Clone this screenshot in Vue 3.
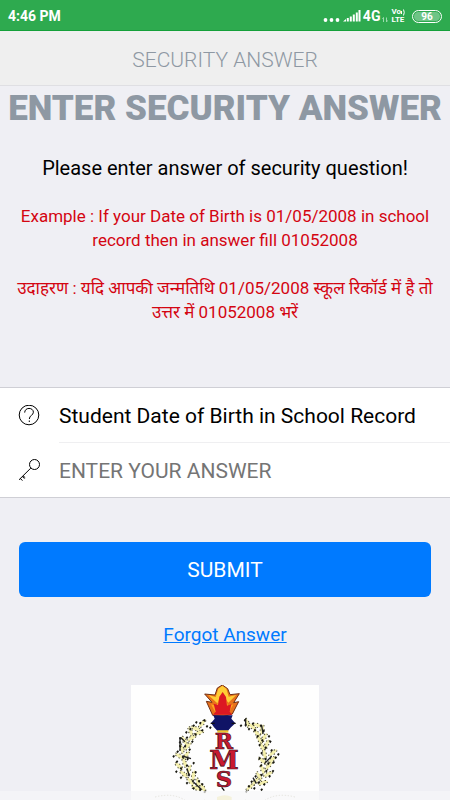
<script setup>
import { ref } from 'vue'

const answer = ref('')

const leaves = [
  [232, 128, -50], [212, 142, 200], [222, 156, -20], [196, 152, 70], [200, 172, -30],
  [178, 180, 60], [188, 196, -50], [170, 204, 75], [164, 226, 30], [184, 224, -60],
  [178, 246, 70], [162, 256, 40], [192, 266, -70], [176, 280, 40], [206, 284, -80],
  [196, 302, 50], [218, 306, 80], [214, 322, 20], [234, 322, 60],
  [366, 126, 70], [382, 138, 40], [398, 134, 20], [412, 146, -80], [396, 158, 50],
  [418, 170, -60], [404, 178, 60], [426, 190, -70], [412, 200, 60], [444, 216, -40],
  [418, 220, 80], [442, 236, -40], [412, 240, 40], [432, 254, -50], [412, 266, 70],
  [430, 280, -30], [402, 286, 60], [392, 302, -50], [414, 306, -20], [376, 318, -40]
]

const specks = [
  [238, 118], [226, 126], [214, 124], [206, 134], [246, 136], [256, 140], [196, 144],
  [232, 148], [184, 154], [212, 160], [166, 172], [165, 184], [166, 196], [186, 170],
  [202, 182], [180, 196], [194, 206], [158, 212], [146, 226], [174, 228], [188, 234],
  [156, 242], [206, 246], [186, 254], [168, 262], [154, 272], [212, 274], [192, 282],
  [168, 290], [204, 300], [186, 306], [222, 300], [232, 310], [206, 322], [226, 326], [240, 332],
  [348, 134], [360, 118], [362, 132], [372, 144], [384, 128], [390, 148], [408, 134],
  [416, 150], [398, 166], [412, 178], [432, 166], [436, 182], [404, 192], [422, 200],
  [440, 208], [460, 220], [410, 216], [452, 230], [446, 244], [422, 234], [404, 232],
  [430, 248], [408, 254], [444, 270], [424, 270], [410, 282], [434, 286], [392, 286],
  [380, 302], [402, 304], [418, 310], [372, 316], [388, 322], [410, 326], [364, 332]
]
</script>

<template>
  <div class="app">
    <header class="status">
      <span class="time">4:46 PM</span>
      <div class="indicators">
        <svg width="40" height="16" viewBox="0 0 40 16" fill="#fff" aria-hidden="true">
          <circle cx="2.500" cy="12" r="1.900" /><circle cx="8.500" cy="12" r="1.900" /><circle cx="14.500" cy="12" r="1.900" />
          <path d="M20 13.500l3-2.500v2.500zM23.800 10h2v3.500h-2zM26.800 8.500h2v5h-2zM29.800 6.500h2v7h-2zM32.800 4.500h2v9h-2zM35.500 2h2v11.500h-2z" />
        </svg>
        <span class="network">4G</span>
        <svg class="data" width="6" height="16" viewBox="0 0 6 16" fill="none" stroke="#9bdcae" stroke-width="1" aria-hidden="true">
          <path d="M1.500 12V7.500L.5 9M4.500 7.500V12l1-1.500" />
        </svg>
        <span class="volte">
          <span class="vo">Vo<svg width="4" height="7" viewBox="0 0 4 7" fill="none" stroke="#fff" aria-hidden="true"><path d="M.5 2v3M2.500.500q1.500 3 0 6" /></svg></span>
          <span>LTE</span>
        </span>
        <span class="battery"><span>96</span></span>
      </div>
    </header>

    <nav class="navbar">SECURITY ANSWER</nav>

    <main class="content">
      <h1>ENTER SECURITY ANSWER</h1>
      <p class="lead">Please enter answer of security question!</p>
      <p class="hint">Example : If your Date of Birth is 01/05/2008 in school record then in answer fill 01052008</p>
      <p class="hint">उदाहरण : यदि आपकी जन्मतिथि 01/05/2008 स्कूल रिकॉर्ड में है तो उत्तर में 01052008 भरें</p>

      <form @submit.prevent>
        <div class="fields">
          <div class="row">
            <svg width="22" height="22" viewBox="0 0 22 22" fill="none" stroke="#000" stroke-width="1" aria-hidden="true">
              <circle cx="11" cy="10" r="9.800" />
              <path d="M6.700 7.600c0-2.500 1.800-4.200 4.300-4.200s4.400 1.600 4.400 3.800c0 2.900-4.100 3.400-4.100 6.800" />
              <path d="M11.300 15.500v1.500" />
            </svg>
            <label for="answer">Student Date of Birth in School Record</label>
          </div>
          <div class="row">
            <svg width="22" height="22" viewBox="0 0 22 22" fill="none" stroke="#000" stroke-width="1" aria-hidden="true">
              <circle cx="16.500" cy="5.500" r="5" />
              <path d="M12.900 9L1 20.800M2.200 19.500l2.300 2M4.200 17.500l2.300 2M5 16.800l2.200 1.800" />
            </svg>
            <input id="answer" v-model="answer" type="text" placeholder="ENTER YOUR ANSWER">
          </div>
        </div>
        <button class="submit" type="submit">SUBMIT</button>
      </form>

      <a class="forgot" href="#forgot">Forgot Answer</a>

      <svg class="crest" viewBox="18 12 564 564" role="img" aria-label="RMS">
        <path fill="#fefefe" d="M18 12h564v564H18z" />
        <g v-for="(leaf, i) in leaves" :key="'l' + i" :transform="`translate(${leaf[0]} ${leaf[1]}) rotate(${leaf[2]})`">
          <path d="M-17 0Q0-13 17 0Q0 9-17 0" fill="#f5f0ad" />
          <path d="M-16-2Q0-11 16-1M-13 3Q2 8 17 1" fill="none" stroke="#4b4934" stroke-width="3" stroke-dasharray="4 8" />
        </g>
        <path v-for="(s, i) in specks" :key="'s' + i" :d="`M${s[0] - 4} ${s[1]}l4-4 4 3-4 6z`" fill="#17170f" />
        <path d="M165 168v42M168 170l12 12M362 112v24M410 134l4 24M172 225l26 8M206 304l22 20M186 262l6 20M440 226l-22 22M384 290l10 18" fill="none" stroke="#222" stroke-width="4" />
        <path d="M90 348q55-14 90 10t60-4M510 348q-55-14-90 10t-60-4" fill="none" stroke="#b8b59d" stroke-width="3" stroke-dasharray="4 5" />
        <path d="M276 348q24-10 44 0v14h-44z" fill="#f1e69a" />
        <path d="M239 39l31 3 7-21 15-9 16 11 7 18 28-3-17 27 15-3-19 37-28 8-31-4-19-42 17 3z" fill="#e9711a" stroke="#713014" stroke-width="3" />
        <path d="M250 42l22 6 8-25 12-9 12 9 7 24 23-5-24 23-17-22-16 24z" fill="#ffcd35" />
        <path d="M258 70l17 5 8-24 10-14 10 16 6 23 16-6-14 26H272z" fill="#ffa51e" />
        <path d="M264 101l8-9-6-24 13 4 4-25 10-14 10 15 3 26 13-4-5 22 8 9z" fill="#dc1822" />
        <path d="M265 103h58l-4 10 12 14-13 12-9 10h-32l-10-10-9-13 11-13z" fill="#101466" />
        <path d="M277 148h33v7h-33z" fill="#f0c52b" />
        <g class="letters" text-anchor="middle">
          <text x="297" y="205" font-size="66">R</text>
          <text x="297" y="265" font-size="80">M</text>
          <text x="297" y="319" font-size="68">S</text>
        </g>
        <path d="M257 127h12M320 127h12M290 319l8 10" stroke="#111" stroke-width="4" />
      </svg>
    </main>
    <div class="toolbar"></div>
  </div>
</template>

<style>
body {
  margin: 0;
}
</style>

<style scoped>
.app {
  position: relative;
  display: flex;
  flex-direction: column;
  height: 100vh;
  background: #efeff4;
  color: #000;
  font-family: Roboto, "Noto Sans", "Noto Sans Devanagari", sans-serif;
}

.status {
  display: flex;
  flex: none;
  align-items: center;
  justify-content: space-between;
  box-sizing: border-box;
  height: 31px;
  padding: 2px 8px 0;
  border-bottom: 1px solid #15a03a;
  background: #2eaa4f;
  color: #fff;
  font-weight: 700;
  font-size: 14px;
}

.indicators {
  display: flex;
  align-items: center;
}

.data {
  margin: 4px 3px 0 2px;
}

.volte {
  display: flex;
  flex-direction: column;
  margin-right: 7px;
  font-size: 8px;
  line-height: 8px;
}

.vo {
  display: flex;
  align-items: center;
}

.battery {
  box-sizing: border-box;
  width: 30px;
  padding: 1px;
  border: 1px solid #fff;
  border-radius: 7px;
  font-size: 10px;
  line-height: 9px;
  text-align: center;
}

.battery span {
  display: block;
  border-radius: 5px;
  background: #6fc486;
}

.navbar {
  flex: none;
  box-sizing: border-box;
  height: 55px;
  border-bottom: 1px solid #dfdfe3;
  background: #efefef;
  color: #8e98a3;
  font-weight: 300;
  font-size: 21px;
  line-height: 58px;
  text-align: center;
}

.content {
  display: flex;
  flex: 1;
  flex-direction: column;
  min-height: 0;
  overflow-y: auto;
  scrollbar-width: none;
}

h1 {
  margin: 0;
  color: #8e98a3;
  font-weight: 900;
  font-size: 35px;
  line-height: 46px;
  text-align: center;
  white-space: nowrap;
}

.lead {
  margin: 22px 0;
  font-size: 20px;
  line-height: 28px;
  text-align: center;
}

.hint {
  margin: 0 8px 24px;
  color: #d40511;
  font-size: 17px;
  line-height: 24px;
  text-align: center;
}

form {
  margin-top: 39px;
}

.fields {
  border-top: 1px solid #cfcfd5;
  border-bottom: 1px solid #cfcfd5;
  background: #fff;
}

.row {
  display: flex;
  align-items: center;
  padding-left: 18px;
}

.row svg {
  flex: none;
  margin-right: 19px;
}

.row label,
.row input {
  box-sizing: border-box;
  flex: 1;
  min-width: 0;
  height: 54px;
  padding: 0;
  border: 0;
  background: none;
  color: #000;
  font: 400 21px/56px Roboto, sans-serif;
  outline: 0;
}

.row label {
  height: 55px;
  border-bottom: 1px solid #efeff1;
}

.row input {
  padding-top: 2px;
}

.row input::placeholder {
  color: #757575;
  opacity: 1;
}

.submit {
  display: block;
  width: calc(100% - 38px);
  height: 55px;
  margin: 44px 19px 0;
  padding: 0;
  border: 0;
  border-radius: 6px;
  background: #007aff;
  color: #fff;
  font: 400 21px/56px Roboto, sans-serif;
}

.forgot {
  align-self: center;
  margin-top: 26px;
  color: #007aff;
  font-size: 19px;
  line-height: 24px;
  text-decoration: underline;
}

.crest {
  flex: none;
  align-self: center;
  width: 188px;
  height: 188px;
  margin-top: 38px;
}

.letters {
  fill: #c91830;
  stroke: #3c0d18;
  stroke-width: 2px;
  font-family: "DejaVu Serif", serif;
  font-weight: 700;
}

.toolbar {
  position: absolute;
  right: 0;
  bottom: 0;
  left: 0;
  height: 9px;
  background: rgba(247, 247, 248, 0.7);
}
</style>
